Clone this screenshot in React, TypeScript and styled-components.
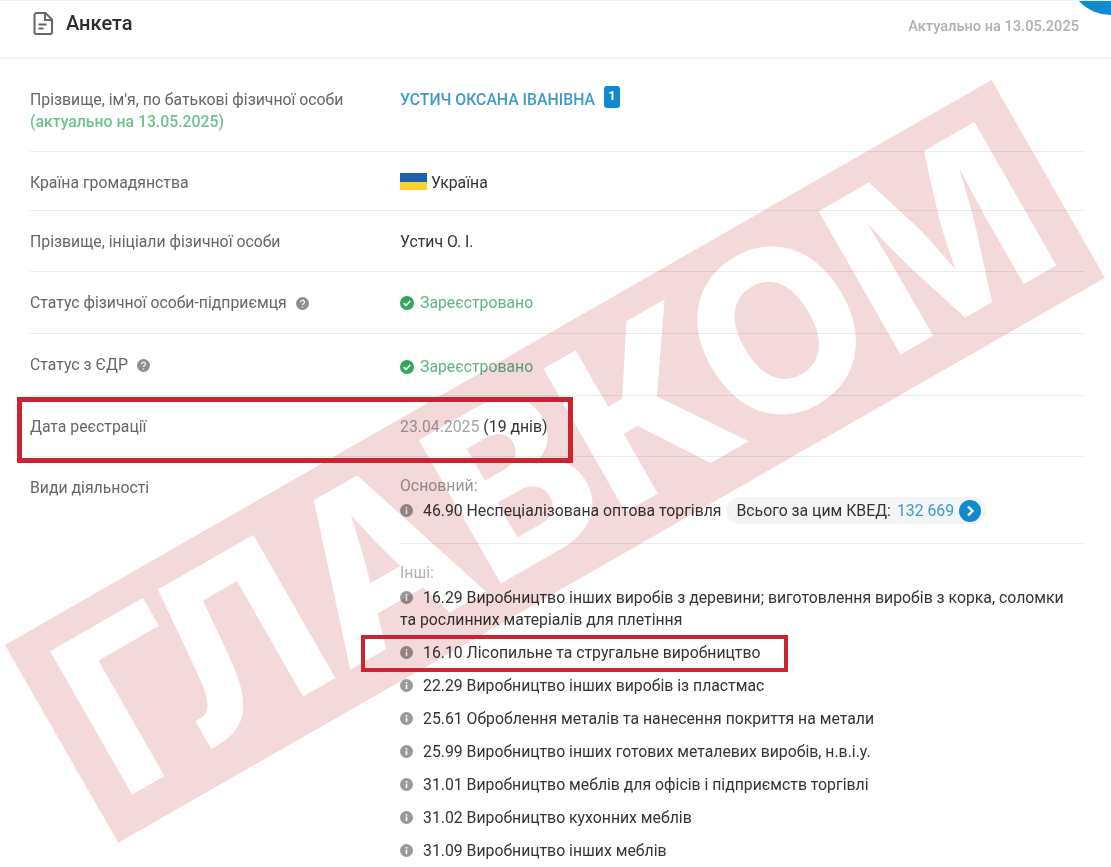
import React from 'react';
import styled, { createGlobalStyle } from 'styled-components';

const GlobalStyle = createGlobalStyle`
  html, body {
    margin: 0;
    padding: 0;
    background: #fff;
  }
  body {
    font-family: Roboto, "Liberation Sans", sans-serif;
    font-size: 15.8px;
    color: #333;
  }
`;

const Page = styled.div`
  position: relative;
  width: 1111px;
  height: 867px;
  overflow: hidden;
  background: #fff;
  border-top: 1px solid #f0f0f0;
  box-sizing: border-box;
  filter: blur(0.35px);
`;

const Header = styled.header`
  display: flex;
  justify-content: space-between;
  align-items: center;
  height: 58px;
  padding: 0 32px 12px 33px;
  box-sizing: border-box;
  border-bottom: 2px solid #f3f3f3;
`;

const HeaderTitle = styled.div`
  display: flex;
  align-items: center;
  gap: 13px;
`;

const Title = styled.h2`
  margin: 0;
  font-size: 20px;
  font-weight: 500;
  color: #2c2c2c;
`;

const Actual = styled.span`
  font-size: 14.6px;
  font-weight: 500;
  color: #b0b0b0;
  margin-top: 6px;
`;

const CornerButton = styled.div`
  position: absolute;
  top: -74px;
  right: -44px;
  width: 88px;
  height: 88px;
  border-radius: 50%;
  background: #1089cf;

  &::after {
    content: '';
    position: absolute;
    left: 27px;
    bottom: 14px;
    width: 12px;
    height: 2px;
    border-radius: 1px;
    background: #fff;
  }
`;

const Table = styled.div`
  margin: 10px 27px 0 30px;
`;

const Row = styled.div<{ $h: number; $plain?: boolean }>`
  display: grid;
  grid-template-columns: 370px 1fr;
  min-height: ${(p) => p.$h}px;
  padding-top: 20px;
  box-sizing: border-box;
  line-height: 22px;
  border-bottom: ${(p) => (p.$plain ? 'none' : '1px solid #ececec')};
`;

const Label = styled.div`
  color: #666;
  display: flex;
  flex-wrap: wrap;
  align-items: flex-start;
  align-content: flex-start;
`;

const Fresh = styled.div`
  flex-basis: 100%;
  color: #6cc38b;
  font-weight: 500;
`;

const Value = styled.div<{ $nudge?: number }>`
  display: flex;
  align-items: flex-start;
  color: #333;
  padding-top: ${(p) => p.$nudge ?? 0}px;
`;

const PersonLink = styled.a`
  color: #3d9bc9;
  font-weight: 500;
`;

const CountBadge = styled.span`
  margin: -3px 0 0 9px;
  width: 16px;
  height: 22px;
  border-radius: 3px;
  background: #1089cf;
  color: #fff;
  font-size: 13px;
  font-weight: 700;
  line-height: 20px;
  text-align: center;
`;

const Flag = styled.span`
  width: 27px;
  height: 17px;
  margin: 1px 4px 0 0;
  background: linear-gradient(#1f5fae 50%, #f7d32f 50%);
`;

const Registered = styled.span`
  display: flex;
  align-items: center;
  gap: 6px;
  color: #5db583;
`;

const HelpIcon = styled.svg`
  width: 13px;
  height: 13px;
  margin: 5px 0 0 9px;
`;

const MutedDate = styled.span`
  color: #a3a3a3;
  margin-right: 4px;
`;

const Caption = styled.div<{ $dim?: boolean }>`
  color: ${(p) => (p.$dim ? '#b3b3b3' : '#999')};
  margin-top: -2px;
`;

const Activity = styled.div<{ $gap?: number }>`
  margin-top: ${(p) => p.$gap ?? 11}px;
  max-width: 670px;
  color: #333;
`;

const Dot = styled.svg`
  width: 13px;
  height: 13px;
  margin-right: 10px;
  vertical-align: -1px;
`;

const Divider = styled.hr`
  border: 0;
  border-top: 1px solid #ececec;
  margin: 19px 0 20px -1px;
`;

const ActivityMain = styled.div`
  display: flex;
  align-items: center;
  white-space: pre;
`;

const TotalPill = styled.span`
  display: inline-flex;
  align-items: center;
  height: 27px;
  margin-left: 5px;
  padding: 0 5px 0 10px;
  border-radius: 14px;
  background: #f2f4f6;
  color: #333;
`;

const TotalCount = styled.span`
  color: #3d9bc9;
  margin: 0 5px 0 6px;
`;

const NextCircle = styled.svg`
  width: 22px;
  height: 22px;
`;

const Stamp = styled.div`
  position: absolute;
  left: 5px;
  top: 644px;
  width: 1137px;
  height: 228px;
  display: flex;
  align-items: center;
  justify-content: center;
  transform-origin: 0 0;
  transform: rotate(-29.8deg);
  background: #f3d9da;
  mix-blend-mode: multiply;
`;

const StampText = styled.span`
  font-family: Inter, "Liberation Sans", sans-serif;
  font-weight: 800;
  font-size: 216px;
  line-height: 1;
  color: #fff;
  white-space: nowrap;
  transform: translateY(-3px) scaleY(1.05);
`;

const Highlight = styled.div<{ $x: number; $y: number; $w: number; $h: number; $b: number }>`
  position: absolute;
  left: ${(p) => p.$x}px;
  top: ${(p) => p.$y}px;
  width: ${(p) => p.$w}px;
  height: ${(p) => p.$h}px;
  box-sizing: border-box;
  border: ${(p) => p.$b}px solid #cb2431;
`;

function FileIcon() {
  return (
    <svg width="20" height="23" viewBox="0 0 20 23" fill="none" stroke="#666" strokeWidth="2">
      <path d="M3.500 1h9l6.500 6.500v12.500a2 2 0 0 1-2 2H3.500a2 2 0 0 1-2-2V3a2 2 0 0 1 2-2z" />
      <path d="M12 1.500v6.500h6.500" />
      <path d="M5.500 12.500h8M5.500 16.500h5" />
    </svg>
  );
}

function CheckBadge() {
  return (
    <svg width="14" height="14" viewBox="0 0 14 14">
      <circle cx="7" cy="7" r="7" fill="#2fa85c" />
      <path d="M3.800 7.200l2.200 2.200 4.200-4.400" fill="none" stroke="#fff" strokeWidth="1.800" />
    </svg>
  );
}

function Help() {
  return (
    <HelpIcon viewBox="0 0 13 13">
      <circle cx="6.500" cy="6.500" r="6.500" fill="#8e8e8e" />
      <path d="M4.600 5.200a1.900 1.900 0 1 1 2.800 1.600c-.6.4-.9.7-.9 1.300" fill="none" stroke="#fff" strokeWidth="1.200" />
      <circle cx="6.500" cy="10" r=".8" fill="#fff" />
    </HelpIcon>
  );
}

function Info() {
  return (
    <Dot viewBox="0 0 13 13">
      <circle cx="6.500" cy="6.500" r="6.500" fill="#999" />
      <rect x="5.700" y="5.600" width="1.600" height="4.400" fill="#fff" />
      <rect x="5.700" y="3" width="1.600" height="1.600" fill="#fff" />
    </Dot>
  );
}

const otherActivities = [
  { id: '16.10 Лісопильне та стругальне виробництво' },
  { id: '22.29 Виробництво інших виробів із пластмас' },
  { id: '25.61 Оброблення металів та нанесення покриття на метали' },
  { id: '25.99 Виробництво інших готових металевих виробів, н.в.і.у.' },
  { id: '31.01 Виробництво меблів для офісів і підприємств торгівлі' },
  { id: '31.02 Виробництво кухонних меблів' },
  { id: '31.09 Виробництво інших меблів' },
];

export default function App() {
  return (
    <Page>
      <GlobalStyle />
      <Header>
        <HeaderTitle>
          <FileIcon />
          <Title>Анкета</Title>
        </HeaderTitle>
        <Actual>Актуально на 13.05.2025</Actual>
      </Header>
      <CornerButton />

      <Table>
        <Row $h={83}>
          <Label>
            Прізвище, ім'я, по батькові фізичної особи
            <Fresh>(актуально на 13.05.2025)</Fresh>
          </Label>
          <Value>
            <PersonLink>УСТИЧ ОКСАНА ІВАНІВНА</PersonLink>
            <CountBadge>1</CountBadge>
          </Value>
        </Row>
        <Row $h={59}>
          <Label>Країна громадянства</Label>
          <Value>
            <Flag />
            Україна
          </Value>
        </Row>
        <Row $h={61}>
          <Label>Прізвище, ініціали фізичної особи</Label>
          <Value>Устич О. І.</Value>
        </Row>
        <Row $h={62}>
          <Label>
            Статус фізичної особи-підприємця
            <Help />
          </Label>
          <Value>
            <Registered>
              <CheckBadge />
              Зареєстровано
            </Registered>
          </Value>
        </Row>
        <Row $h={62}>
          <Label>
            Статус з ЄДР
            <Help />
          </Label>
          <Value $nudge={2}>
            <Registered>
              <CheckBadge />
              Зареєстровано
            </Registered>
          </Value>
        </Row>
        <Row $h={61}>
          <Label>Дата реєстрації</Label>
          <Value>
            <MutedDate>23.04.2025</MutedDate>(19 днів)
          </Value>
        </Row>
        <Row $h={410} $plain>
          <Label>Види діяльності</Label>
          <div>
            <Caption>Основний:</Caption>
            <ActivityMain>
              <Info />
              46.90 Неспеціалізована оптова торгівля
              <TotalPill>
                Всього за цим КВЕД:
                <TotalCount>132 669</TotalCount>
                <NextCircle viewBox="0 0 22 22">
                  <circle cx="11" cy="11" r="11" fill="#1089cf" />
                  <path d="M9 6.500l4.500 4.500L9 15.500" fill="none" stroke="#fff" strokeWidth="2.400" />
                </NextCircle>
              </TotalPill>
            </ActivityMain>
            <Divider />
            <Caption $dim>Інші:</Caption>
            <Activity $gap={3}>
              <Info />
              16.29 Виробництво інших виробів з деревини; виготовлення виробів з корка, соломки
              та рослинних матеріалів для плетіння
            </Activity>
            {otherActivities.map((item) => (
              <Activity key={item.id}>
                <Info />
                {item.id}
              </Activity>
            ))}
          </div>
        </Row>
      </Table>

      <Stamp>
        <StampText>ГЛАВКОМ</StampText>
      </Stamp>
      <Highlight $x={17} $y={396} $w={556} $h={66} $b={5} />
      <Highlight $x={361} $y={634} $w={427} $h={37} $b={4} />
    </Page>
  );
}
